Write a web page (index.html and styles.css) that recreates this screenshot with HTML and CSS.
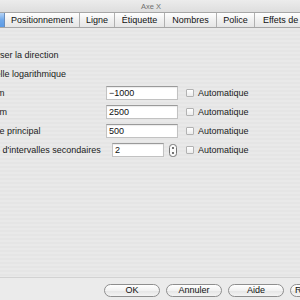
FILE: index.html
```html
<!DOCTYPE html>
<html lang="fr">
<head>
<meta charset="utf-8">
<title>Axe X</title>
<link rel="stylesheet" href="styles.css">
</head>
<body>
<div class="window">
  <div class="titlebar"><span class="title">Axe X</span></div>
  <div class="tabs">
    <div class="tab tab-selected">Échelle</div>
    <div class="tab w75">Positionnement</div>
    <div class="tab w35">Ligne</div>
    <div class="tab w50">Étiquette</div>
    <div class="tab w52">Nombres</div>
    <div class="tab w38">Police</div>
    <div class="tab w80">Effets de caractère</div>
  </div>
  <div class="content">
    <div class="inner">
      <label class="check-row"><span class="box"></span><span>Inverser la direction</span></label>
      <label class="check-row"><span class="box"></span><span>Échelle logarithmique</span></label>
      <div class="form">
        <span class="lbl">Minimum</span>
        <div class="field"><span class="input w72">−1000</span></div>
        <label class="auto"><span class="box"></span><span>Automatique</span></label>

        <span class="lbl">Maximum</span>
        <div class="field"><span class="input w72">2500</span></div>
        <label class="auto"><span class="box"></span><span>Automatique</span></label>

        <span class="lbl">Intervalle principal</span>
        <div class="field"><span class="input w72">500</span></div>
        <label class="auto"><span class="box"></span><span>Automatique</span></label>

        <span class="lbl">Nombre d'intervalles secondaires</span>
        <div class="field spin-field">
          <span class="input w52">2</span>
          <span class="stepper">
            <svg width="8" height="13" viewBox="0 0 8 13"><rect x="0.5" y="0.5" width="7" height="12" rx="3" fill="#fafafa" stroke="#777"/><circle cx="4" cy="4" r="0.9" fill="#333"/><circle cx="4" cy="9" r="0.9" fill="#333"/></svg>
          </span>
        </div>
        <label class="auto"><span class="box"></span><span>Automatique</span></label>
      </div>
    </div>
  </div>
  <div class="footer">
    <button class="btn">OK</button>
    <button class="btn">Annuler</button>
    <button class="btn">Aide</button>
    <button class="btn">Rétablir</button>
  </div>
</div>
</body>
</html>
```
FILE: styles.css
```css
html, body {
  margin: 0;
  padding: 0;
  width: 300px;
  height: 300px;
  overflow: hidden;
  background: #e8e8e8;
}
.window {
  width: 300px;
  height: 300px;
  display: flex;
  flex-direction: column;
  font-family: "Liberation Sans", Arial, sans-serif;
  font-size: 9px;
  color: #1a1a1a;
  overflow: hidden;
}
.titlebar {
  height: 12px;
  flex: none;
  background: linear-gradient(#ececec, #dedede);
  display: flex;
  justify-content: center;
  align-items: center;
}
.title {
  font-size: 7.5px;
  color: #707070;
  padding-left: 2px;
}
.tabs {
  flex: none;
  height: 14px;
  display: flex;
  border-top: 1px solid #a6a6a6;
  border-bottom: 1px solid #a6a6a6;
  background: linear-gradient(#ffffff, #f0f0f0 50%, #e6e6e6);
  overflow: hidden;
  white-space: nowrap;
}
.tab {
  flex: none;
  display: flex;
  align-items: center;
  justify-content: center;
  border-right: 1px solid #b0b0b0;
  box-sizing: border-box;
  line-height: 14px;
  color: #111;
}
.tab-selected {
  width: 5px;
  justify-content: flex-end;
  overflow: hidden;
  color: transparent;
  background: linear-gradient(#b6d4f6, #6fa8ea 50%, #5c9ae4);
  border-right: 1px solid #6b8fbd;
}
.w75 { width: 75px; }
.w35 { width: 35px; }
.w50 { width: 50px; }
.w52 { width: 52px; }
.w38 { width: 38px; }
.w80 { width: 80px; justify-content: flex-start; padding-left: 8px; border-right: none; }
.content {
  flex: 1;
  background: repeating-linear-gradient(#e9e9e9 0 2px, #e5e5e5 2px 4px);
  overflow: hidden;
}
.inner {
  margin-left: -32px;
  padding-top: 20px;
  display: flex;
  flex-direction: column;
  gap: 5px;
}
.check-row {
  height: 14px;
  display: flex;
  align-items: center;
  gap: 4px;
  white-space: nowrap;
}
.box {
  flex: none;
  width: 8px;
  height: 8px;
  box-sizing: border-box;
  border: 1px solid #b2b2b2;
  border-radius: 1px;
  background: linear-gradient(#ffffff, #ececec);
}
.form {
  margin-top: 0;
  display: grid;
  grid-template-columns: 138px 80px auto;
  row-gap: 5px;
  align-items: center;
}
.lbl {
  white-space: nowrap;
  line-height: 14px;
}
.field {
  height: 14px;
  display: flex;
  align-items: center;
}
.input {
  height: 14px;
  box-sizing: border-box;
  background: #ffffff;
  border: 1px solid #c2c2c2;
  border-top-color: #9a9a9a;
  box-shadow: inset 0 1px 1px rgba(0,0,0,0.08);
  padding-left: 2px;
  line-height: 12px;
  color: #111;
}
.w72 { width: 72px; }
.spin-field { padding-left: 6px; gap: 5px; }
.input.w52 { width: 52px; }
.stepper { display: flex; height: 13px; }
.auto {
  display: flex;
  align-items: center;
  gap: 4px;
  white-space: nowrap;
}
.footer {
  flex: none;
  height: 23px;
  box-sizing: border-box;
  border-top: 1px solid #d2d2d2;
  background: #ebebeb;
  display: flex;
  align-items: flex-start;
  gap: 6px;
  padding-left: 104px;
  padding-top: 6px;
}
.btn {
  flex: none;
  width: 56px;
  height: 13px;
  padding: 0;
  border: 1px solid #8e8e8e;
  border-radius: 7px;
  background: linear-gradient(#ffffff, #f2f2f2 50%, #e4e4e4 51%, #f4f4f4);
  font-family: "Liberation Sans", Arial, sans-serif;
  font-size: 9px;
  line-height: 11px;
  color: #111;
  text-align: center;
  overflow: hidden;
  white-space: nowrap;
}
.footer .btn:last-child {
  text-align: left;
  padding-left: 4px;
}
```
